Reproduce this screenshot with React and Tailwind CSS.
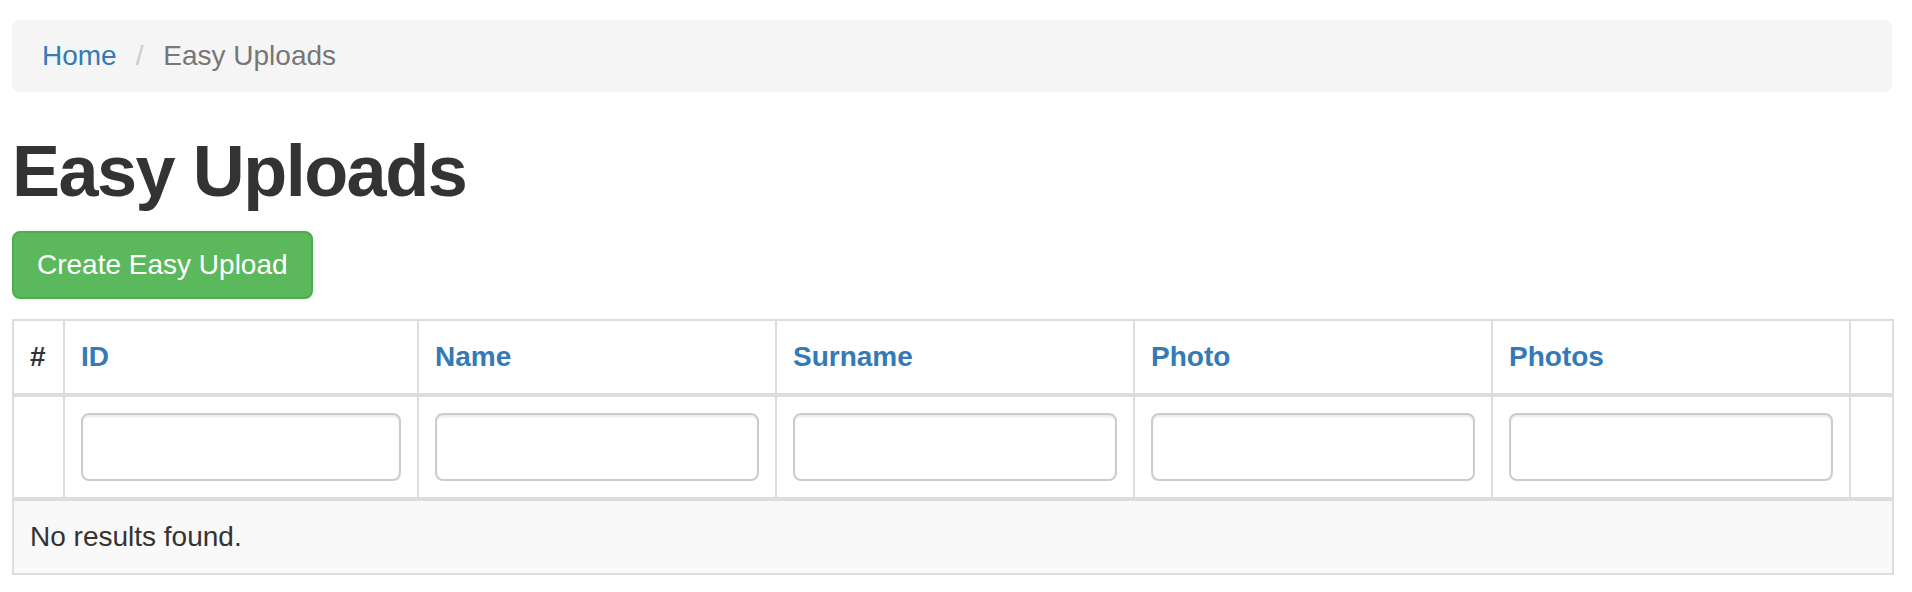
import React from 'react';

const columns = [
  { key: 'id', label: 'ID', width: 'w-[354px]' },
  { key: 'name', label: 'Name', width: 'w-[358px]' },
  { key: 'surname', label: 'Surname', width: 'w-[358px]' },
  { key: 'photo', label: 'Photo', width: 'w-[358px]' },
  { key: 'photos', label: 'Photos', width: 'w-[358px]' },
];

const App = () => {
  return (
    <div className="min-h-[592px] bg-white pt-[20px] pl-[12px] pr-[20px] text-[28px] leading-[40px] text-[#333] font-['Liberation_Sans',Arial,sans-serif]">
      <ol className="flex items-center h-[72px] px-[30px] py-[16px] mb-[40px] bg-[#f5f5f5] rounded-[8px]">
        <li>
          <a href="#" className="text-[#337ab7]">Home</a>
        </li>
        <li className="ml-[9px] text-[#777]">
          <span className="px-[10px] text-[#ccc]">/&nbsp;</span>
          <span className="ml-[2px]">Easy Uploads</span>
        </li>
      </ol>

      <h1 className="text-[72px] leading-[79px] font-semibold tracking-[-1.5px] text-[#333] mb-[20px]">Easy Uploads</h1>

      <p className="mb-[20px]">
        <button className="h-[68px] px-[23px] text-white bg-[#5cb85c] border-2 border-[#4cae4c] rounded-[8px]">
          Create Easy Upload
        </button>
      </p>

      <table className="w-[1880px] table-fixed border-collapse border-2 border-[#ddd]">
        <thead>
          <tr>
            <th className="w-[51px] p-[16px] text-left align-bottom font-bold border-2 border-b-4 border-[#ddd]">#</th>
            {columns.map((col) => (
              <th
                key={col.key}
                className={`${col.width} p-[16px] text-left align-bottom font-bold border-2 border-b-4 border-[#ddd]`}
              >
                <a href="#" className="text-[#337ab7]">{col.label}</a>
              </th>
            ))}
            <th className="w-[43px] p-[16px] border-2 border-b-4 border-[#ddd]"></th>
          </tr>
          <tr>
            <td className="p-[16px] border-2 border-b-4 border-[#ddd]"></td>
            {columns.map((col) => (
              <td key={col.key} className="p-[16px] border-2 border-b-4 border-[#ddd]">
                <input
                  type="text"
                  className="block w-full h-[68px] px-[24px] bg-white border-2 border-[#ccc] rounded-[8px] shadow-[inset_0_2px_2px_rgba(0,0,0,0.075)] outline-none"
                />
              </td>
            ))}
            <td className="p-[16px] border-2 border-b-4 border-[#ddd]"></td>
          </tr>
        </thead>
        <tbody>
          <tr className="bg-[#f9f9f9]">
            <td colSpan={7} className="p-[16px] border-2 border-[#ddd]">
              <div>No results found.</div>
            </td>
          </tr>
        </tbody>
      </table>
    </div>
  );
};

export default App;
